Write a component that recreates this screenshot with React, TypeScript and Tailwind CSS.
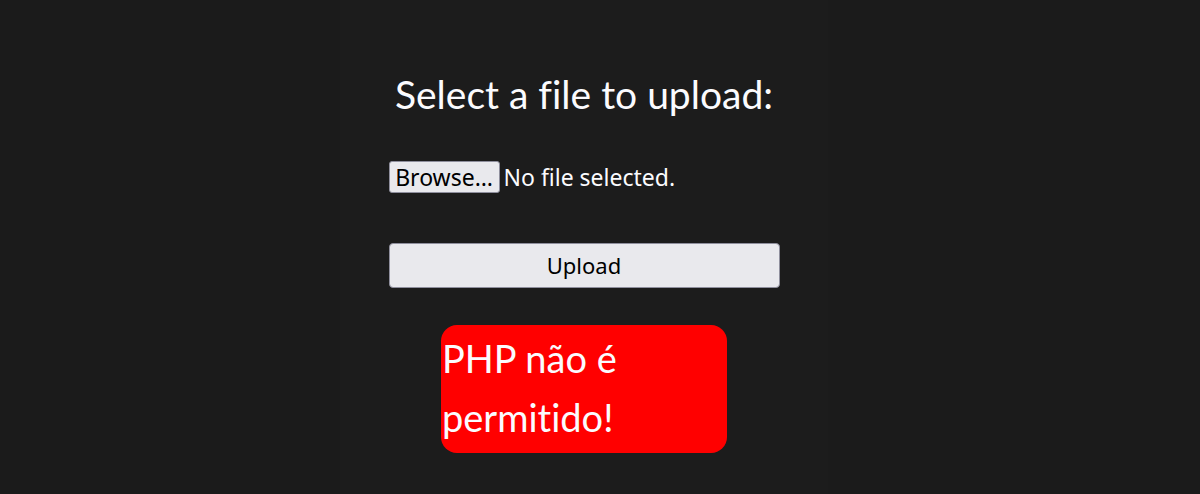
import React from "react";

export default function App() {
  return (
    <div
      className="w-[1200px] h-[494px] bg-[#1b1b1b] flex overflow-hidden [font-variant-ligatures:none]"
      style={{ fontFamily: "Lato, 'Noto Sans', sans-serif" }}
    >
      <div className="w-[340px] shrink-0" />
      <div className="w-[488px] shrink-0 bg-[#1c1c1c] flex flex-col items-center">
        <h1 className="mt-[70px] text-[39px] leading-[48px] text-[#fbfbfe] font-normal">
          Select a file to upload:
        </h1>
        <div
          className="w-[391px] mt-[43px] flex flex-col"
          style={{ fontFamily: "'Noto Sans', sans-serif" }}
        >
          <div className="flex items-center h-[32px]">
            <span className="h-[32px] w-[111px] justify-center flex items-center bg-[#e9e9ed] border border-[#8f8f9d] rounded-[3px] text-[23px] text-black">
              Browse…
            </span>
            <span className="ml-[4px] text-[23px] text-[#fbfbfe]">No file selected.</span>
          </div>
          <button className="mt-[50px] h-[45px] w-[391px] bg-[#e9e9ed] border border-[#8f8f9d] rounded-[4px] text-[22px] text-black">
            Upload
          </button>
        </div>
        <div className="mt-[37px] w-[286px] h-[128px] bg-[#ff0000] rounded-[16px] text-[38px] leading-[59px] text-[#fbfbfe] pl-[1px] pt-[4px]">
          PHP não é permitido!
        </div>
      </div>
    </div>
  );
}
